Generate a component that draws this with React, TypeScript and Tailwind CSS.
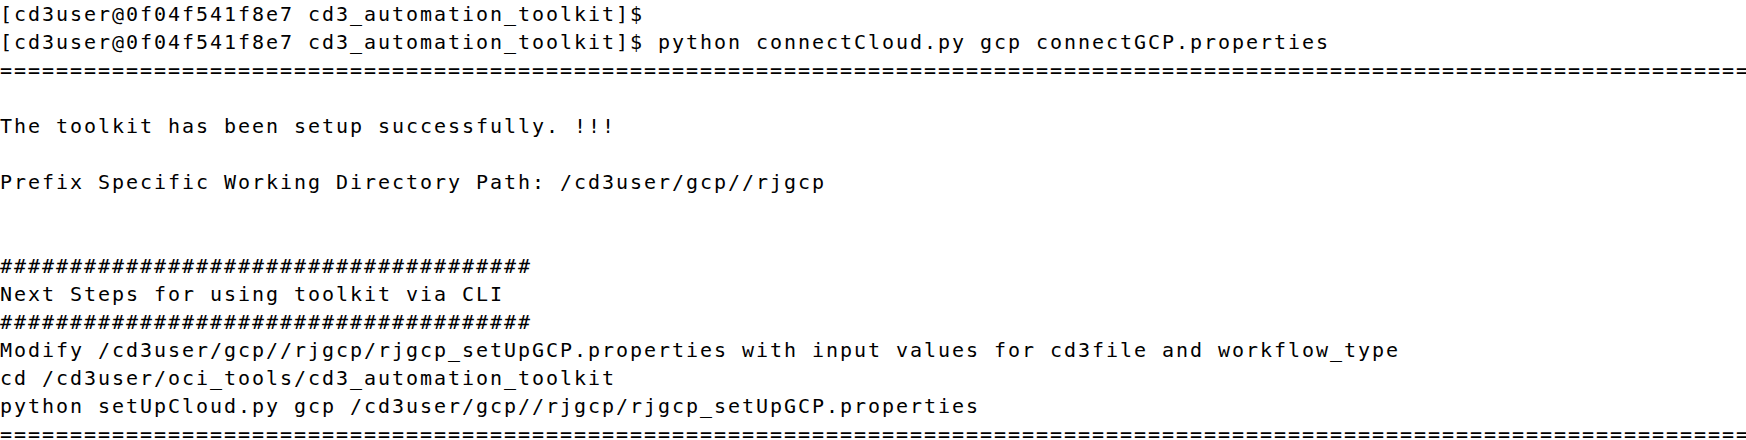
import React from "react";

const prompt = "[cd3user@0f04f541f8e7 cd3_automation_toolkit]$";
const rule = "=".repeat(140);
const hashes = "#".repeat(38);

const lines: string[] = [
  prompt,
  `${prompt} python connectCloud.py gcp connectGCP.properties`,
  rule,
  "",
  "The toolkit has been setup successfully. !!!",
  "",
  "Prefix Specific Working Directory Path: /cd3user/gcp//rjgcp",
  "",
  "",
  hashes,
  "Next Steps for using toolkit via CLI",
  hashes,
  "Modify /cd3user/gcp//rjgcp/rjgcp_setUpGCP.properties with input values for cd3file and workflow_type",
  "cd /cd3user/oci_tools/cd3_automation_toolkit",
  "python setUpCloud.py gcp /cd3user/gcp//rjgcp/rjgcp_setUpGCP.properties",
  rule,
];

function App() {
  return (
    <div className="w-full h-[440px] overflow-hidden bg-white text-black">
      <div className="font-['DejaVu_Sans_Mono',monospace] text-[20px] leading-[28px] tracking-[1.96px]">
        {lines.map((line, i) => (
          <div key={i} className="h-[28px] whitespace-pre overflow-hidden">
            {line}
          </div>
        ))}
      </div>
    </div>
  );
}

export default App;
